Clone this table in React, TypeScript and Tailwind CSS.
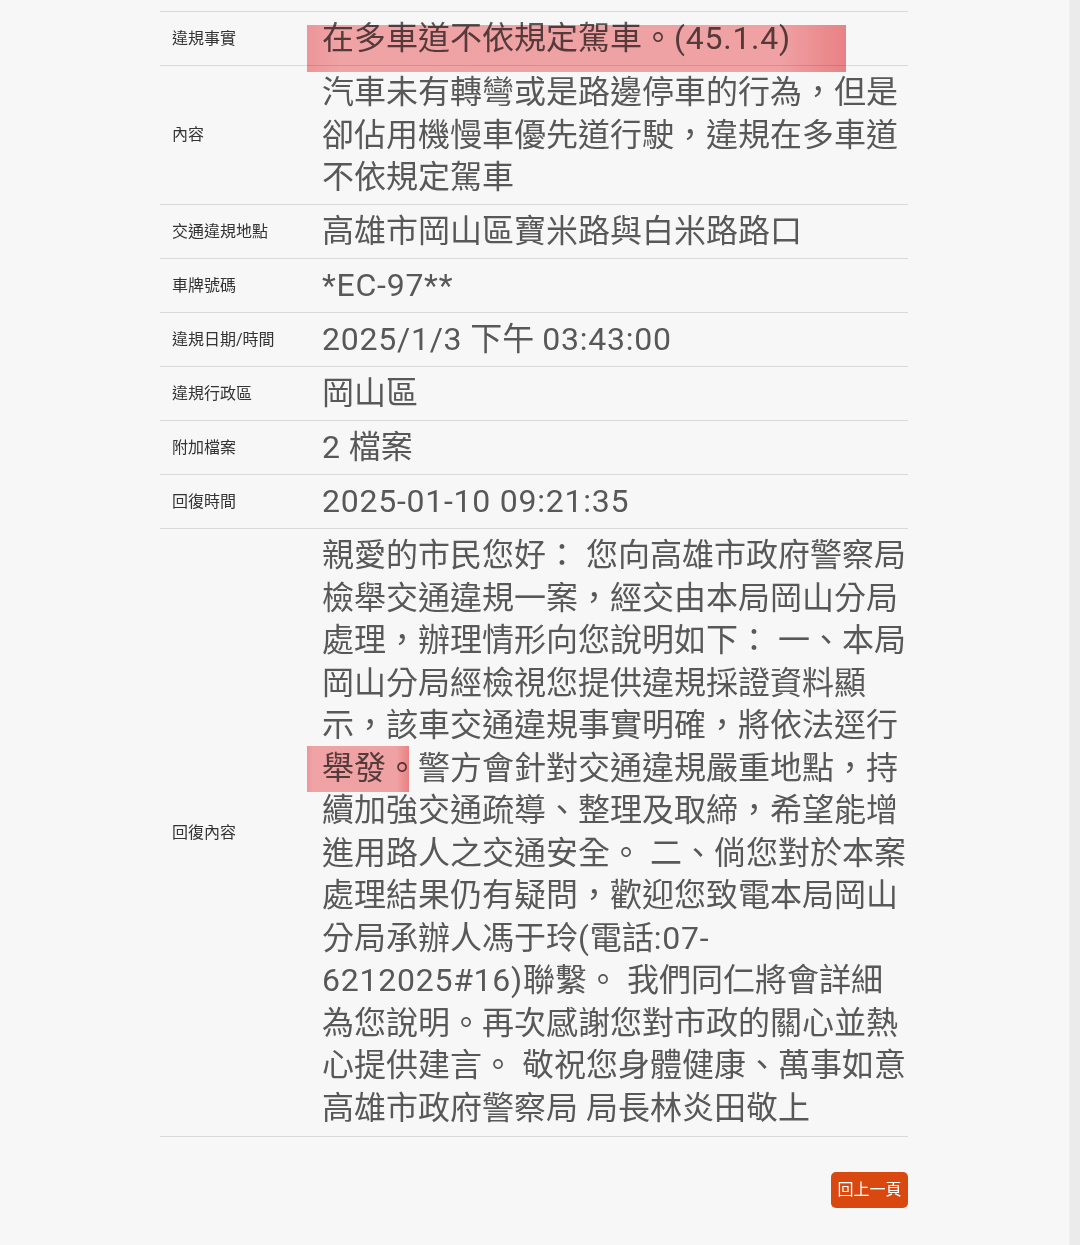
import React from "react";

const FONT = { fontFamily: "Roboto, 'Noto Sans CJK TC', 'Noto Sans', sans-serif" };

type Row = { label: string; value: React.ReactNode; hl?: React.ReactNode };

const HL =
  "pointer-events-none absolute mix-blend-multiply bg-[linear-gradient(90deg,#f49b9e,#f7a8aa_6%,#f7a6a8_88%,#f18588)]";

function L({ children }: { children: React.ReactNode }) {
  return <span className="tracking-[0.75px]">{children}</span>;
}

const rows: Row[] = [
  {
    label: "違規事實",
    value: (
      <>
        在多車道不依規定駕車。<L>(45.1.4)</L>
      </>
    ),
    hl: <div className={HL + " left-[-3px] top-[13px] w-[539px] h-[47px]"} />,
  },
  {
    label: "內容",
    value: "汽車未有轉彎或是路邊停車的行為，但是卻佔用機慢車優先道行駛，違規在多車道不依規定駕車",
  },
  { label: "交通違規地點", value: "高雄市岡山區寶米路與白米路路口" },
  { label: "車牌號碼", value: <L>*EC-97**</L> },
  {
    label: "違規日期/時間",
    value: (
      <>
        <L>2025/1/3</L> 下午 <L>03:43:00</L>
      </>
    ),
  },
  { label: "違規行政區", value: "岡山區" },
  {
    label: "附加檔案",
    value: (
      <>
        <L>2</L> 檔案
      </>
    ),
  },
  { label: "回復時間", value: <L>2025-01-10 09:21:35</L> },
  {
    label: "回復內容",
    value: (
      <>
        親愛的市民您好： 您向高雄市政府警察局檢舉交通違規一案，經交由本局岡山分局處理，辦理情形向您說明如下： 一、本局岡山分局經檢視您提供違規採證資料顯示，該車交通違規事實明確，將依法逕行舉發。警方會針對交通違規嚴重地點，持續加強交通疏導、整理及取締，希望能增進用路人之交通安全。 二、倘您對於本案處理結果仍有疑問，歡迎您致電本局岡山分局承辦人馮于玲<L>(</L>電話<L>:07-</L>
        <wbr />
        <L>6212025#16)</L>聯繫。 我們同仁將會詳細為您說明。再次感謝您對市政的關心並熱心提供建言。 敬祝您身體健康、萬事如意 高雄市政府警察局 局長林炎田敬上
      </>
    ),
    hl: <div className={HL + " left-[-3px] top-[217px] w-[102px] h-[46px]"} />,
  },
];

export default function App() {
  return (
    <div className="flex h-[1245px] w-[1080px] bg-[#f7f7f7] overflow-hidden" style={FONT}>
      <div className="flex-1">
        <div className="ml-[160px] w-[748px] pt-[11px]">
          {rows.map((r, i) => (
            <div key={i} className="flex border-t border-[#dadada]">
              <div className="w-[150px] shrink-0 flex items-center pl-[12px] text-[16px] text-[#333333]">
                {r.label}
              </div>
              <div
                className={
                  "relative w-[598px] pl-[12px] pt-[5.25px] text-[32px] leading-[42.5px] text-[#585858] " +
                  (i === rows.length - 1 ? "pb-[6.75px]" : "pb-[5.25px]")
                }
              >
                {r.value}
                {r.hl}
              </div>
            </div>
          ))}
          <div className="border-t border-[#dadada]" />
          <div className="flex justify-end mt-[35px]">
            <button className="h-[36px] w-[77px] rounded-[5px] bg-[#d9480f] text-white text-[16px] leading-none">
              回上一頁
            </button>
          </div>
        </div>
      </div>
      <div className="w-[11px] h-full bg-[#ebebeb] border-l border-[#f0f0f0]" />
    </div>
  );
}
